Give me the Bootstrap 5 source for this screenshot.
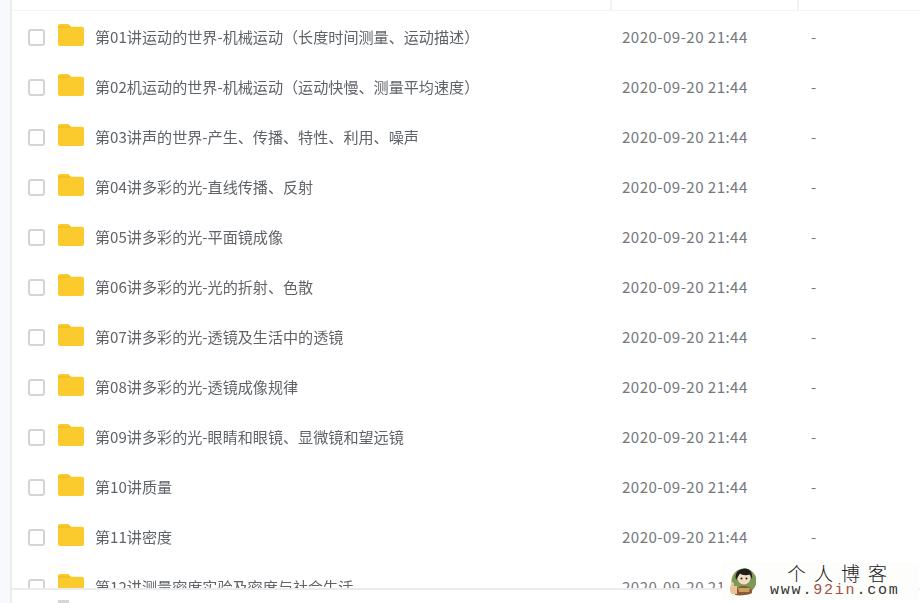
<!DOCTYPE html>
<html lang="zh-CN">

<head>
  <meta charset="UTF-8" />
  <meta name="viewport" content="width=device-width, initial-scale=1.0" />
  <title>文件列表</title>
  <link href="https://cdn.jsdelivr.net/npm/bootstrap@5.3.3/dist/css/bootstrap.min.css" rel="stylesheet">
  <style>
    html, body {
      height: 603px;
      overflow: hidden;
    }

    body {
      background-color: #f7f9fc;
      font-family: "Noto Sans CJK SC", "Liberation Sans", sans-serif;
      font-size: 15.1px;
      color: #666;
    }

    .page-wrap {
      height: 603px;
      margin-left: 10px;
      background-color: #fff;
      border-left: 2px solid #ebebeb;
      position: relative;
      overflow: hidden;
    }

    .file-scroll {
      height: 588px;
      overflow: hidden;
    }

    .head-row {
      height: 11px;
      border-bottom: 1px solid #f5f5f5;
    }

    .head-name {
      width: 600px;
      border-right: 2px solid #f2f2f2;
    }

    .head-date {
      width: 187px;
      border-right: 2px solid #f2f2f2;
    }

    .file-row {
      height: 50px;
      flex-shrink: 0;
    }

    .file-row:first-of-type {
      margin-top: 1px;
    }

    .tick {
      width: 17px;
      height: 17px;
      margin-left: 16px;
      margin-right: 13px;
      margin-top: 2px;
      border: 2px solid #d4d4d4;
      border-radius: 3px;
      background-color: #fff;
      flex-shrink: 0;
    }

    .folder-ico {
      width: 26px;
      height: 22px;
      margin-right: 11px;
      margin-top: -3px;
      flex-shrink: 0;
    }

    .file-name {
      width: 527px;
      color: #5f6368;
      white-space: nowrap;
      will-change: opacity;
    }

    .file-date {
      width: 189px;
      color: #75787d;
      letter-spacing: .45px;
    }

    .file-size {
      color: #75787d;
    }

    .foot-bar {
      height: 15px;
      border-top: 2px solid #ebebeb;
      background-color: #fff;
    }

    .foot-stub {
      width: 11px;
      height: 3px;
      margin: 10px 0 0 46px;
      background-color: #d6d6d6;
    }

    /* watermark sits over the list */
    .stamp {
      position: absolute;
      left: 710px;
      top: 562px;
      width: 197px;
      height: 38px;
      background-color: rgba(253, 253, 252, .94);
    }

    .stamp-face {
      width: 26px;
      height: 28px;
      margin: 6px 0 0 8px;
      flex-shrink: 0;
    }

    .stamp-text {
      margin-left: 14px;
    }

    .stamp-title {
      font-family: "Noto Sans CJK SC", serif;
      font-weight: 300;
      font-size: 19px;
      line-height: 22px;
      letter-spacing: 8px;
      color: #222;
      margin-left: 17px;
      white-space: nowrap;
    }

    .stamp-url {
      font-family: "Liberation Mono", monospace;
      font-size: 15px;
      line-height: 14px;
      letter-spacing: 1.8px;
      color: #333;
      white-space: nowrap;
    }

    .stamp-url span {
      color: #a5503f;
    }
  </style>
</head>

<body>
  <svg width="0" height="0" class="d-block position-absolute">
    <symbol id="folder" viewBox="0 0 26 22">
      <path d="M2 0h7.500c1 0 1.500.4 2.200 1.200L13 2.800h11c1.100 0 2 .9 2 2V20c0 1.100-.9 2-2 2H2c-1.100 0-2-.9-2-2V2C0 .9.900 0 2 0z" fill="#fbcb2d" />
      <path d="M0 3.400h13l-1.300-.9H0z" fill="#eeb71e" />
    </symbol>
  </svg>

  <div class="page-wrap">
    <div class="file-scroll">
      <div class="head-row d-flex">
        <div class="head-name"></div>
        <div class="head-date"></div>
      </div>

      <div class="file-row d-flex align-items-center">
        <div class="tick"></div>
        <svg class="folder-ico"><use href="#folder" /></svg>
        <div class="file-name">第01讲运动的世界-机械运动（长度时间测量、运动描述）</div>
        <div class="file-date">2020-09-20 21:44</div>
        <div class="file-size">-</div>
      </div>
      <div class="file-row d-flex align-items-center">
        <div class="tick"></div>
        <svg class="folder-ico"><use href="#folder" /></svg>
        <div class="file-name">第02机运动的世界-机械运动（运动快慢、测量平均速度）</div>
        <div class="file-date">2020-09-20 21:44</div>
        <div class="file-size">-</div>
      </div>
      <div class="file-row d-flex align-items-center">
        <div class="tick"></div>
        <svg class="folder-ico"><use href="#folder" /></svg>
        <div class="file-name">第03讲声的世界-产生、传播、特性、利用、噪声</div>
        <div class="file-date">2020-09-20 21:44</div>
        <div class="file-size">-</div>
      </div>
      <div class="file-row d-flex align-items-center">
        <div class="tick"></div>
        <svg class="folder-ico"><use href="#folder" /></svg>
        <div class="file-name">第04讲多彩的光-直线传播、反射</div>
        <div class="file-date">2020-09-20 21:44</div>
        <div class="file-size">-</div>
      </div>
      <div class="file-row d-flex align-items-center">
        <div class="tick"></div>
        <svg class="folder-ico"><use href="#folder" /></svg>
        <div class="file-name">第05讲多彩的光-平面镜成像</div>
        <div class="file-date">2020-09-20 21:44</div>
        <div class="file-size">-</div>
      </div>
      <div class="file-row d-flex align-items-center">
        <div class="tick"></div>
        <svg class="folder-ico"><use href="#folder" /></svg>
        <div class="file-name">第06讲多彩的光-光的折射、色散</div>
        <div class="file-date">2020-09-20 21:44</div>
        <div class="file-size">-</div>
      </div>
      <div class="file-row d-flex align-items-center">
        <div class="tick"></div>
        <svg class="folder-ico"><use href="#folder" /></svg>
        <div class="file-name">第07讲多彩的光-透镜及生活中的透镜</div>
        <div class="file-date">2020-09-20 21:44</div>
        <div class="file-size">-</div>
      </div>
      <div class="file-row d-flex align-items-center">
        <div class="tick"></div>
        <svg class="folder-ico"><use href="#folder" /></svg>
        <div class="file-name">第08讲多彩的光-透镜成像规律</div>
        <div class="file-date">2020-09-20 21:44</div>
        <div class="file-size">-</div>
      </div>
      <div class="file-row d-flex align-items-center">
        <div class="tick"></div>
        <svg class="folder-ico"><use href="#folder" /></svg>
        <div class="file-name">第09讲多彩的光-眼睛和眼镜、显微镜和望远镜</div>
        <div class="file-date">2020-09-20 21:44</div>
        <div class="file-size">-</div>
      </div>
      <div class="file-row d-flex align-items-center">
        <div class="tick"></div>
        <svg class="folder-ico"><use href="#folder" /></svg>
        <div class="file-name">第10讲质量</div>
        <div class="file-date">2020-09-20 21:44</div>
        <div class="file-size">-</div>
      </div>
      <div class="file-row d-flex align-items-center">
        <div class="tick"></div>
        <svg class="folder-ico"><use href="#folder" /></svg>
        <div class="file-name">第11讲密度</div>
        <div class="file-date">2020-09-20 21:44</div>
        <div class="file-size">-</div>
      </div>
      <div class="file-row d-flex align-items-center">
        <div class="tick"></div>
        <svg class="folder-ico"><use href="#folder" /></svg>
        <div class="file-name">第12讲测量密度实验及密度与社会生活</div>
        <div class="file-date">2020-09-20 21:44</div>
        <div class="file-size">-</div>
      </div>
    </div>

    <div class="foot-bar">
      <div class="foot-stub"></div>
    </div>

    <div class="stamp d-flex">
      <svg class="stamp-face" viewBox="0 0 26 28">
        <circle cx="14" cy="13" r="12.500" fill="#7d9a55" />
        <path d="M5 27c0-7 4-9 9-9s9 3 8 7c-3 2-12 3-17 2z" fill="#8a5a32" />
        <path d="M8 20h12l-1 4H9z" fill="#c9a15f" />
        <circle cx="14" cy="10" r="6.500" fill="#f4dcc4" />
        <path d="M6 12C4 4 10 .5 15 .5s8 4 7 11l-2-5c-3 1-8 1-10-1z" fill="#1e1e1e" />
        <circle cx="11.500" cy="10.500" r="1" fill="#222" />
        <circle cx="16.500" cy="10.500" r="1" fill="#222" />
        <path d="M0 21c0-3 1-4 2-7l2 1v3h3v8H2c-1 0-2-2-2-5z" fill="#eac39a" />
      </svg>
      <div class="stamp-text">
        <div class="stamp-title">个人博客</div>
        <div class="stamp-url">www.<span>92in</span>.com</div>
      </div>
    </div>
  </div>
</body>

</html>
